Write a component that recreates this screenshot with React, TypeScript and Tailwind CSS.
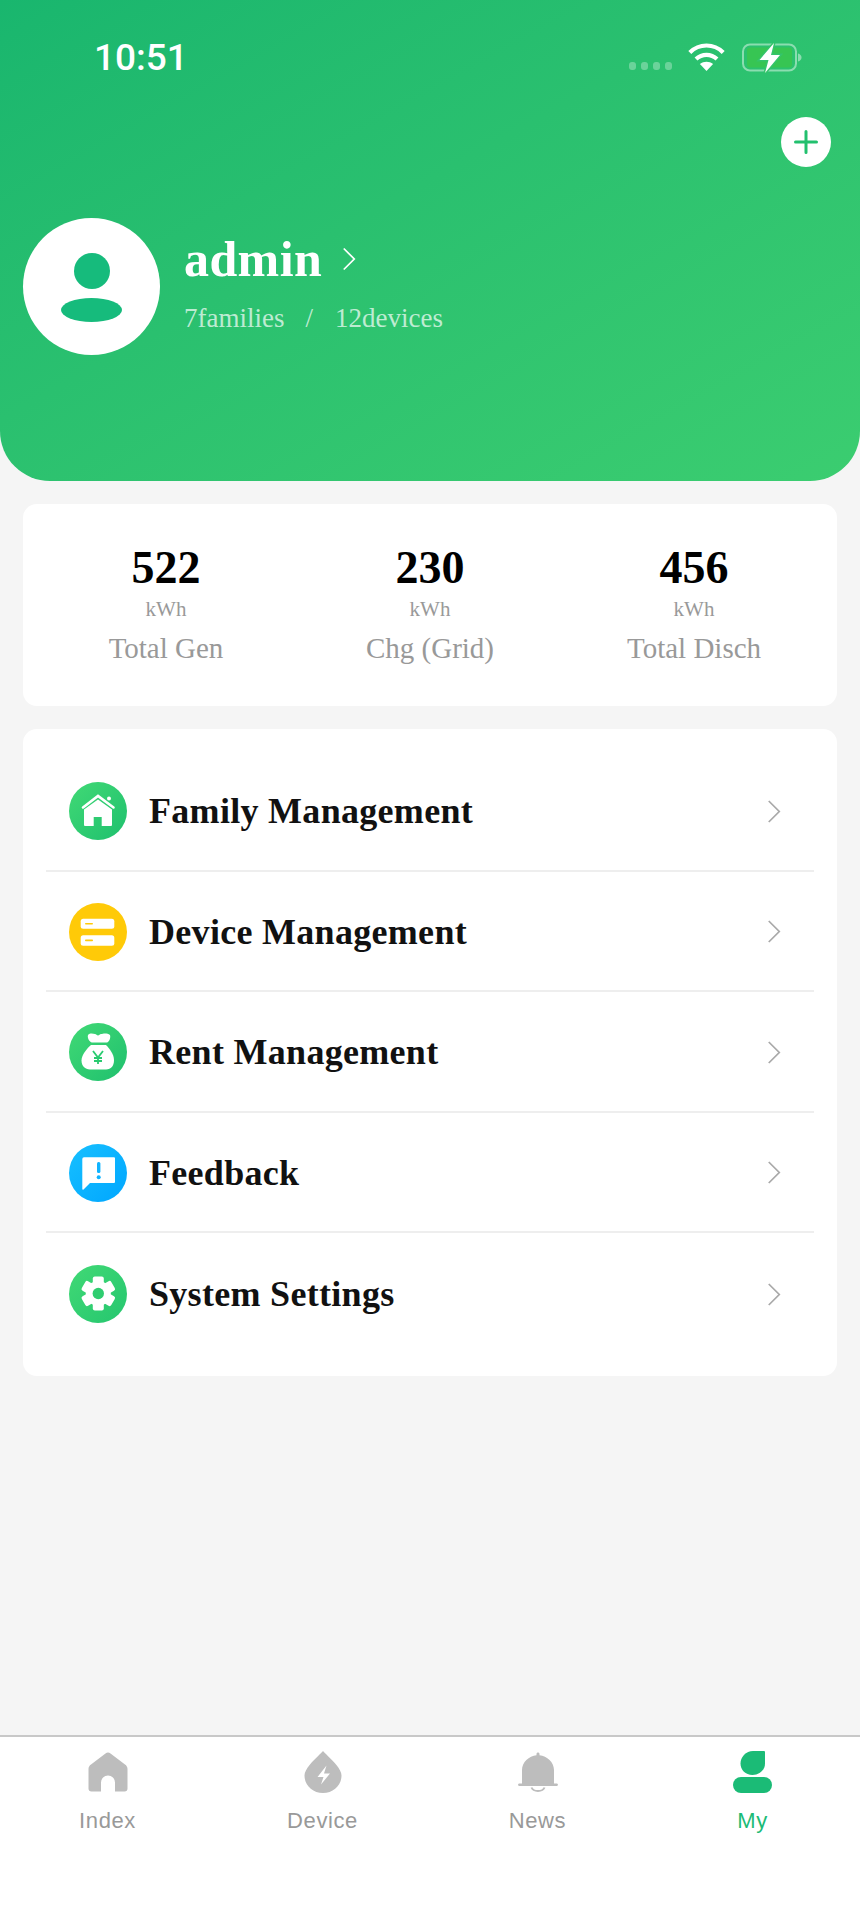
import React from 'react';

const SERIF = "font-['Liberation_Serif',serif]";

const Chevron = ({ className, stroke }: { className: string; stroke: string }) => (
  <svg viewBox="0 0 16 28" className={className} fill="none" stroke={stroke} strokeWidth="2">
    <path d="M2 2l12 12L2 26" />
  </svg>
);

const FamilyIcon = () => (
  <svg viewBox="0 0 58 58" className="w-[58px] h-[58px]">
    <defs>
      <linearGradient id="g1" x1="0" y1="0" x2="1" y2="1">
        <stop offset="0" stopColor="#41d975" />
        <stop offset="1" stopColor="#1fc06e" />
      </linearGradient>
    </defs>
    <circle cx="29" cy="29" r="29" fill="url(#g1)" />
    <circle cx="40" cy="16.5" r="2" fill="#fff" />
    <path d="M14 25.5L29 14l15.500 11.500" fill="none" stroke="#fff" strokeWidth="2.6" strokeLinecap="round" />
    <path d="M15 27.500L29 17.500l14 10V43a1 1 0 0 1-1 1h-9.300v-9h-8v9H16a1 1 0 0 1-1-1z" fill="#fff" />
  </svg>
);

const DeviceIcon = () => (
  <svg viewBox="0 0 58 58" className="w-[58px] h-[58px]">
    <circle cx="29" cy="29" r="29" fill="#ffca08" />
    <rect x="11.700" y="15.700" width="33.600" height="10" rx="2.500" fill="#fff" />
    <rect x="11.700" y="32.300" width="33.600" height="10.400" rx="2.500" fill="#fff" />
    <rect x="16" y="20" width="8" height="1.600" rx="0.800" fill="#ffca08" />
    <rect x="16" y="36.600" width="8" height="1.600" rx="0.800" fill="#ffca08" />
  </svg>
);

const RentIcon = () => (
  <svg viewBox="0 0 58 58" className="w-[58px] h-[58px]">
    <defs>
      <linearGradient id="g2" x1="0" y1="0" x2="1" y2="1">
        <stop offset="0" stopColor="#41d975" />
        <stop offset="1" stopColor="#1fc06e" />
      </linearGradient>
    </defs>
    <circle cx="29" cy="29" r="29" fill="url(#g2)" />
    <path d="M19 12c2-2.500 5-1.500 7-1 1 .3 2 1.500 3 1.500s2-1.200 3-1.500c2-.5 6-1.500 9 1 1 3-1 7-3 7.500H23c-2.500-.5-5-4.500-4-7.500z" fill="#fff" />
    <path d="M22 22h15c3 3 8 9 8 15 0 6-3 9.500-8 9.500H21c-5 0-8.500-3.500-8.500-9 0-6 6-12.500 9.500-15.500z" fill="#fff" />
    <path d="M24 28l5 6.500 5-6.500M29 34.500V41M25 35h8M25 38h8" fill="none" stroke="#2acb70" strokeWidth="1.800" />
  </svg>
);

const FeedbackIcon = () => (
  <svg viewBox="0 0 58 58" className="w-[58px] h-[58px]">
    <defs>
      <linearGradient id="g3" x1="0" y1="0" x2="1" y2="1">
        <stop offset="0" stopColor="#17c0ff" />
        <stop offset="1" stopColor="#00a6ff" />
      </linearGradient>
    </defs>
    <circle cx="29" cy="29" r="29" fill="url(#g3)" />
    <path d="M15 13.300h30a1 1 0 0 1 1 1V38a1 1 0 0 1-1 1H21l-6.500 6.500c-.5.500-1.200.2-1.200-.5V15a1.700 1.700 0 0 1 1.700-1.700z" fill="#fff" />
    <rect x="28" y="18" width="3.400" height="11" rx="1.500" fill="#0fb3ff" />
    <circle cx="29.700" cy="33.300" r="2" fill="#0fb3ff" />
  </svg>
);

const SettingsIcon = () => (
  <svg viewBox="0 0 58 58" className="w-[58px] h-[58px]">
    <defs>
      <linearGradient id="g4" x1="0" y1="0" x2="1" y2="1">
        <stop offset="0" stopColor="#41d975" />
        <stop offset="1" stopColor="#25c66f" />
      </linearGradient>
    </defs>
    <circle cx="29" cy="29" r="29" fill="url(#g4)" />
    <g fill="#fff" transform="translate(29.300 28.500)">
      <circle r="12.500" />
      {[0, 60, 120, 180, 240, 300].map((deg) => (
        <rect key={deg} x="-5.500" y="-17" width="11" height="8" rx="2" transform={`rotate(${deg})`} />
      ))}
    </g>
    <circle cx="29.300" cy="28.500" r="5.700" fill="#2fcd70" />
  </svg>
);

const HomeTab = () => (
  <svg viewBox="0 0 40 40" className="w-[40px] h-[40px]">
    <path d="M17.500 1.500c1.500-1.200 3.500-1.200 5 0l14.500 11c1.500 1 2.500 2.500 2.500 4.500v19.500a3 3 0 0 1-3 3h-9.500v-9a7 7 0 0 0-14 0v9H3.500a3 3 0 0 1-3-3V17c0-2 1-3.500 2.500-4.500z" fill="#bdbdbd" />
  </svg>
);

const DropTab = () => (
  <svg viewBox="0 0 38 42" className="w-[38px] h-[42px]">
    <path d="M19 0c1 1.500 9 8.500 13 13.500 3.500 4.300 5.500 8 5.500 11 0 10-8.300 17.500-18.500 17.500S.500 34.500.500 24.500c0-3 2-6.700 5.500-11C10 8.500 18 1.500 19 0z" fill="#bdbdbd" />
    <path d="M22.500 14.500l-9 11.500h6l-2.500 7.500 9-11h-6z" fill="#fff" />
  </svg>
);

const BellTab = () => (
  <svg viewBox="0 0 40 40" className="w-[40px] h-[40px]">
    <path d="M18.500 2c0-2 3-2 3 0v1.200C29 4 36 10 36 18v13.500h3a1.300 1.300 0 0 1 0 2.500H1a1.300 1.300 0 0 1 0-2.500h3V18C4 10 11 4 18.500 3.200z" fill="#bdbdbd" />
    <path d="M13.500 35.500c1 2.500 3.500 3.500 6.500 3.500s5.500-1 6.500-3.500" fill="none" stroke="#bdbdbd" strokeWidth="2" />
  </svg>
);

const MyTab = () => (
  <svg viewBox="0 0 39 42" className="w-[39px] h-[42px]">
    <path d="M20 0h11a1 1 0 0 1 1 1v11.500C32 19 26.500 24 19.500 24S7.500 19 7.500 12.500 13 0 20 0z" fill="#1bbb76" />
    <rect x="0" y="26" width="39" height="16" rx="8" fill="#1bbb76" />
  </svg>
);

const stats = [
  { value: '522', label: 'Total Gen' },
  { value: '230', label: 'Chg (Grid)' },
  { value: '456', label: 'Total Disch' },
];

const menu = [
  { label: 'Family Management', icon: <FamilyIcon /> },
  { label: 'Device Management', icon: <DeviceIcon /> },
  { label: 'Rent Management', icon: <RentIcon /> },
  { label: 'Feedback', icon: <FeedbackIcon /> },
  { label: 'System Settings', icon: <SettingsIcon /> },
];

const tabs = [
  { label: 'Index', icon: <HomeTab /> },
  { label: 'Device', icon: <DropTab /> },
  { label: 'News', icon: <BellTab /> },
  { label: 'My', icon: <MyTab />, active: true },
];

export default function App() {
  return (
    <div className="w-[860px] min-h-[1920px] flex flex-col bg-[#f5f5f5]">
      <header className="h-[481px] rounded-b-[50px] bg-gradient-to-br from-[#19b66e] to-[#3bcd70] shrink-0 text-white">
        <div className="h-[117px] pl-[94px] pr-[58px] pt-[38px] flex justify-between items-start">
          <span className="font-['Roboto',sans-serif] font-medium text-[37px] leading-[40px]">10:51</span>
          <div className="flex items-start mt-[5px]">
            <div className="flex gap-[5px] mt-[19px] mr-[16px]">
              <span className="w-[7px] h-[8px] rounded-[3px] bg-white/30" />
              <span className="w-[7px] h-[8px] rounded-[3px] bg-white/30" />
              <span className="w-[7px] h-[8px] rounded-[3px] bg-white/30" />
              <span className="w-[7px] h-[8px] rounded-[3px] bg-white/30" />
            </div>
            <svg viewBox="0 0 37 28" className="w-[37px] h-[28px] mr-[17px]" fill="none" stroke="#fff" strokeWidth="4.200">
              <path d="M1.800 9.500C6.500 4.800 12 2.500 18.500 2.500s12 2.300 16.700 7" />
              <path d="M8 16c3-2.800 6.500-4.200 10.500-4.200S26 13.200 29 16" />
              <path d="M18.500 28l-6.600-7c2-1.500 4.200-2.200 6.600-2.200s4.600.7 6.600 2.200z" fill="#fff" stroke="none" />
            </svg>
            <svg viewBox="0 0 60 30" className="w-[60px] h-[30px]">
              <rect x="1" y="1.500" width="53" height="26" rx="7" fill="none" stroke="#fff" strokeOpacity="0.45" strokeWidth="2" />
              <rect x="5" y="4.500" width="45" height="20" rx="3" fill="#37c553" />
              <path d="M56 10.500c2 .5 3.500 2 3.500 4s-1.500 3.500-3.500 4z" fill="#fff" fillOpacity="0.45" />
              <path d="M32 0L17.500 17h9L23 30l15-18h-9z" fill="#fff" stroke="#35c46c" strokeWidth="3" paintOrder="stroke" />
            </svg>
          </div>
        </div>
        <div className="flex justify-end pr-[29px]">
          <div className="w-[50px] h-[50px] rounded-full bg-white flex items-center justify-center">
            <svg viewBox="0 0 24 24" className="w-[24px] h-[24px]" stroke="#22c06e" strokeWidth="3" strokeLinecap="round">
              <path d="M12 1.500v21M1.500 12h21" />
            </svg>
          </div>
        </div>
        <div className="flex items-center pl-[23px] mt-[51px]">
          <div className="w-[137px] h-[137px] rounded-full bg-white flex flex-col items-center pt-[35px] shrink-0">
            <span className="w-[36px] h-[36px] rounded-full bg-[#16bb7c]" />
            <span className="w-[61px] h-[24px] rounded-[50%] bg-[#16bb7c] mt-[9px]" />
          </div>
          <div className={`ml-[24px] mb-[8px] ${SERIF}`}>
            <div className="flex items-center">
              <span className="font-bold text-[50px] leading-[56px] tracking-[0.4px]">admin</span>
              <Chevron className="w-[14px] h-[26px] ml-[20px]" stroke="#fff" />
            </div>
            <div className="flex text-[27px] leading-[32px] text-white/70 mt-[15px]">
              <span>7families</span>
              <span className="ml-[21px]">/</span>
              <span className="ml-[22px]">12devices</span>
            </div>
          </div>
        </div>
      </header>

      <main className={`flex-1 px-[23px] pt-[23px] ${SERIF}`}>
        <section className="h-[202px] bg-white rounded-[14px] grid grid-cols-3 px-[11px] pt-[38px]">
          {stats.map((stat) => (
            <div key={stat.label} className="flex flex-col items-center">
              <span className="font-bold text-[46px] leading-[52px] text-black">{stat.value}</span>
              <span className="text-[21px] leading-[24px] text-[#999999] mt-[3px]">kWh</span>
              <span className="text-[29px] leading-[34px] text-[#999999] mt-[10px]">{stat.label}</span>
            </div>
          ))}
        </section>

        <section className="bg-white rounded-[14px] mt-[23px] px-[23px] pt-[22px] pb-[22px]">
          {menu.map((item, i) => (
            <div
              key={item.label}
              className={`h-[120.5px] flex items-center pt-[2px] pl-[23px] pr-[33px] ${i < menu.length - 1 ? 'border-b-2 border-[#eeeeee]' : ''}`}
            >
              {item.icon}
              <span className="ml-[22px] font-bold text-[36px] tracking-[0.3px] text-[#111111]">{item.label}</span>
              <Chevron className="w-[14px] h-[25px] ml-auto" stroke="#a9a9a9" />
            </div>
          ))}
        </section>
      </main>

      <nav className="h-[185px] shrink-0 bg-white border-t-2 border-[#c8c8c8] grid grid-cols-4 font-['Liberation_Sans',sans-serif]">
        {tabs.map((tab) => (
          <div key={tab.label} className="flex flex-col items-center">
            <div className="h-[42px] mt-[14px] flex items-center justify-center">{tab.icon}</div>
            <span className={`mt-[14px] text-[22px] leading-[28px] tracking-[0.6px] ${tab.active ? 'text-[#1bbb76]' : 'text-[#999999]'}`}>
              {tab.label}
            </span>
          </div>
        ))}
      </nav>
    </div>
  );
}
